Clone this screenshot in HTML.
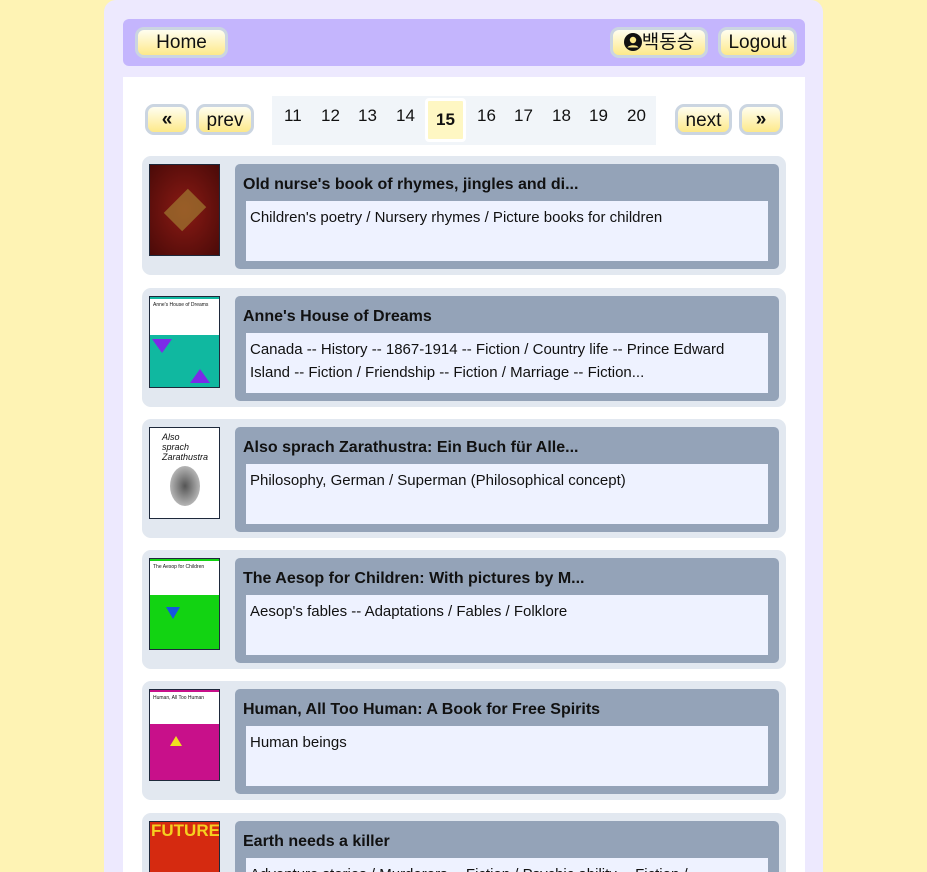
<!DOCTYPE html>
<html style="width:927px;height:872px;overflow:hidden"><head><meta charset="utf-8"><style>
*{box-sizing:border-box;margin:0;padding:0}
body{width:927px;height:872px;overflow:hidden;position:relative;background:#fef3b4;font-family:"Liberation Sans","Noto Sans CJK KR",sans-serif;color:#111}
.wrap{position:absolute;left:104px;top:0;width:719px;height:872px;background:#ede9fe;border-radius:12px 12px 0 0}
.nav{position:absolute;left:123px;top:19px;width:682px;height:47px;background:#c4b5fd;border-radius:6px}
.btn{position:absolute;background:linear-gradient(#fffef0,#fde98a);border:3px solid #cbd5e1;border-radius:9px;font-size:19px;text-align:center;color:#111}
.main{position:absolute;left:123px;top:77px;width:682px;height:795px;background:#fff}
.pg{position:absolute;left:272px;top:96px;width:384px;height:49px;background:#f1f5f9}
.pg span{position:absolute;top:10px;font-size:17px}
.sel{position:absolute;left:425px;top:98px;width:41px;height:44px;background:#fef7c3;border:3px solid #fff;border-radius:4px;font-weight:bold;font-size:17px;text-align:center;line-height:38px}
.card{position:absolute;left:142px;width:644px;height:119px;background:#e2e8f0;border-radius:9px;overflow:hidden}
.img{position:absolute;left:7px;top:8px;width:71px;height:92px;border:1px solid #1e293b;overflow:hidden}
.in{position:absolute;left:93px;top:8px;width:544px;height:105px;background:#94a3b8;border-radius:5px;overflow:hidden}
.t{position:absolute;left:8px;top:12px;font-weight:bold;font-size:16px;white-space:nowrap}
.d{position:absolute;left:11px;top:37px;width:522px;height:60px;background:#eef2ff;padding:5px 4px;font-size:15px;line-height:23px}
</style></head><body>
<div class="wrap"></div>
<div class="nav"></div>
<div class="btn" style="left:135px;top:27px;width:93px;height:31px;line-height:25px">Home</div>
<div class="btn" style="left:610px;top:27px;width:98px;height:31px;line-height:25px"><svg width="18" height="18" viewBox="0 0 18 18" style="vertical-align:-3px"><circle cx="9" cy="9" r="9" fill="#111"/><circle cx="9" cy="7" r="3.2" fill="#fde98a"/><path d="M3.5 14.5c1.5-3 9.5-3 11 0" fill="#fde98a"/></svg>백동승</div>
<div class="btn" style="left:718px;top:27px;width:79px;height:31px;line-height:25px">Logout</div>
<div class="main"></div>
<div class="btn" style="left:145px;top:104px;width:44px;height:31px;line-height:25px;font-weight:bold">«</div>
<div class="btn" style="left:196px;top:104px;width:58px;height:31px;line-height:27px">prev</div>
<div class="pg">
<span style="left:12px">11</span><span style="left:49px">12</span><span style="left:86px">13</span><span style="left:124px">14</span><span style="left:205px">16</span><span style="left:242px">17</span><span style="left:280px">18</span><span style="left:317px">19</span><span style="left:355px">20</span></div>
<div class="sel">15</div>
<div class="btn" style="left:675px;top:104px;width:57px;height:31px;line-height:27px">next</div>
<div class="btn" style="left:739px;top:104px;width:44px;height:31px;line-height:25px;font-weight:bold">»</div>

<div class="card" style="top:156px"><div class="img" style="background:radial-gradient(#8a1a14,#4a0a08)"><div style="position:absolute;left:22px;top:28px;width:26px;height:34px;background:#a07a30;transform:rotate(45deg);opacity:.7"></div></div>
<div class="in"><div class="t">Old nurse's book of rhymes, jingles and di...</div><div class="d">Children's poetry / Nursery rhymes / Picture books for children</div></div></div>

<div class="card" style="top:288px"><div class="img" style="background:#10b8a0"><div style="height:2px;background:#10b8a0"></div><div style="height:36px;background:#fff;font-size:5px;padding:3px">Anne's House of Dreams</div><div style="position:absolute;left:2px;top:42px;width:0;height:0;border:10px solid transparent;border-top:14px solid #7c2ae8"></div><div style="position:absolute;left:40px;top:62px;width:0;height:0;border:10px solid transparent;border-bottom:14px solid #7c2ae8"></div></div>
<div class="in"><div class="t">Anne's House of Dreams</div><div class="d">Canada -- History -- 1867-1914 -- Fiction / Country life -- Prince Edward Island -- Fiction / Friendship -- Fiction / Marriage -- Fiction...</div></div></div>

<div class="card" style="top:419px"><div class="img" style="background:#fff"><div style="position:absolute;left:20px;top:38px;width:30px;height:40px;border-radius:50%;background:radial-gradient(#555,#ddd)"></div><div style="font-style:italic;font-size:9px;padding:4px 12px">Also sprach Zarathustra</div></div>
<div class="in"><div class="t">Also sprach Zarathustra: Ein Buch für Alle...</div><div class="d">Philosophy, German / Superman (Philosophical concept)</div></div></div>

<div class="card" style="top:550px"><div class="img" style="background:#12d312"><div style="height:2px;background:#12d312"></div><div style="height:34px;background:#fff;font-size:5px;padding:3px">The Aesop for Children</div><div style="position:absolute;left:16px;top:48px;width:0;height:0;border:7px solid transparent;border-top:12px solid #1555e0"></div></div>
<div class="in"><div class="t">The Aesop for Children: With pictures by M...</div><div class="d">Aesop's fables -- Adaptations / Fables / Folklore</div></div></div>

<div class="card" style="top:681px"><div class="img" style="background:#c8108a"><div style="height:2px;background:#c8108a"></div><div style="height:32px;background:#fff;font-size:5px;padding:3px">Human, All Too Human</div><div style="position:absolute;left:20px;top:40px;width:0;height:0;border:6px solid transparent;border-bottom:10px solid #f0e020"></div></div>
<div class="in"><div class="t">Human, All Too Human: A Book for Free Spirits</div><div class="d">Human beings</div></div></div>

<div class="card" style="top:813px;height:59px;border-radius:9px 9px 0 0"><div class="img" style="background:#d52a10;height:51px;border-bottom:none"><div style="color:#f5d020;font-weight:bold;font-size:17px;line-height:18px;padding-left:1px">FUTURE</div></div>
<div class="in" style="height:51px;border-radius:5px 5px 0 0"><div class="t">Earth needs a killer</div><div class="d" style="height:14px;overflow:hidden">Adventure stories / Murderers -- Fiction / Psychic ability -- Fiction /</div></div></div>
</body></html>
